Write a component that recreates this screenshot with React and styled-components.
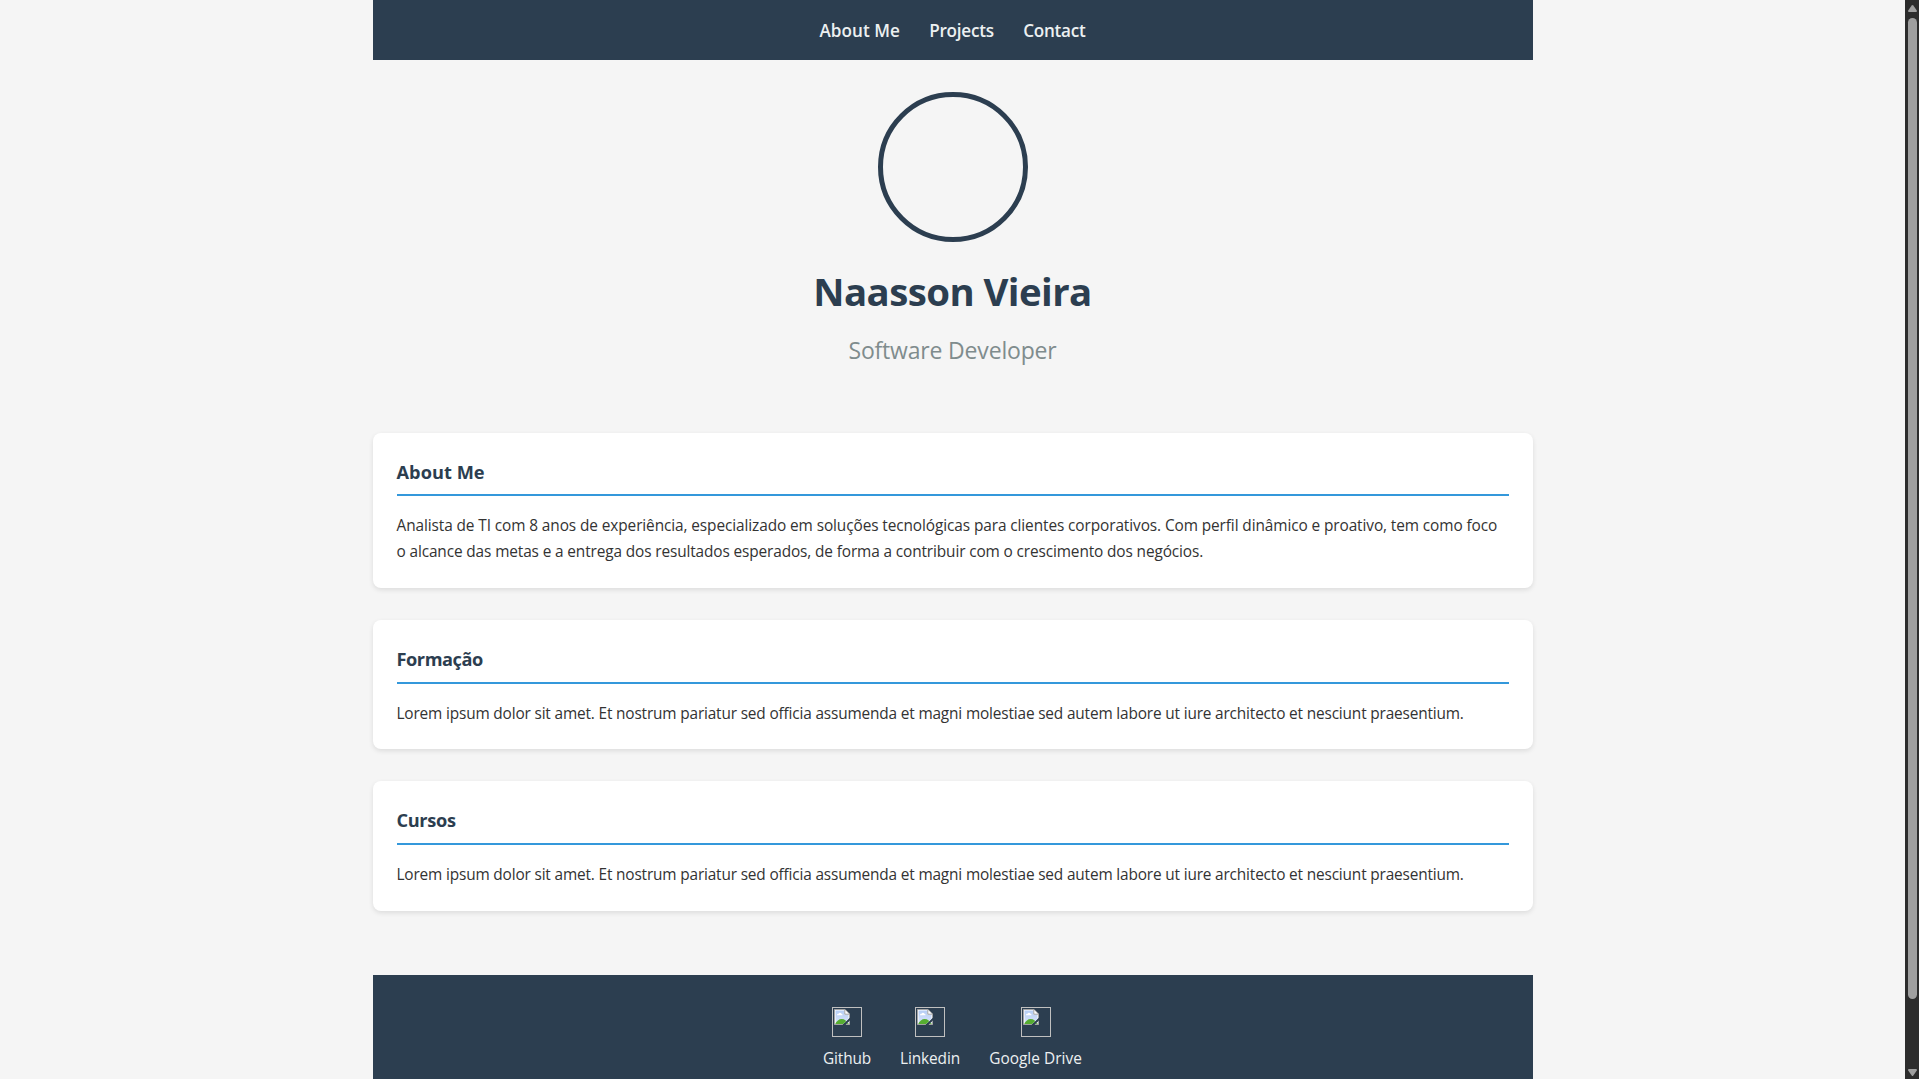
import React from 'react';
import styled, { createGlobalStyle } from 'styled-components';

const GlobalStyle = createGlobalStyle`
  *, *::before, *::after { box-sizing: border-box; }
  body {
    margin: 0;
    overflow: hidden;
    background: #f5f5f5;
    color: #333;
    font-family: "Open Sans", "Noto Sans", sans-serif;
    font-size: 15.4px;
    line-height: 25.6px;
  }
  h1, h2, h3, p, ul { margin: 0; padding: 0; }
  a { color: inherit; text-decoration: none; }
`;

const Viewport = styled.div`
  display: flex;
  height: 100vh;
  overflow: hidden;
`;

const Page = styled.div`
  flex: 1;
  min-width: 0;
`;

const Container = styled.div`
  width: 1160px;
  margin: 0 auto;
`;

const Nav = styled.nav`
  display: flex;
  justify-content: center;
  align-items: center;
  gap: 30px;
  height: 60px;
  padding-top: 2px;
  background: #2c3e50;
`;

const NavLink = styled.a`
  width: ${(p) => p.$width}px;
  display: flex;
  justify-content: center;
  white-space: nowrap;
  color: #ecf0f1;
  font-size: 17.1px;
  font-weight: 600;
  line-height: 28px;
  letter-spacing: ${(p) => p.$tracking}px;
`;

const Header = styled.header`
  display: flex;
  flex-direction: column;
  align-items: center;
  height: 372.5px;
  padding-top: 32px;
`;

const Avatar = styled.div`
  width: 150px;
  height: 150px;
  border: 5px solid #2c3e50;
  border-radius: 50%;
`;

const Name = styled.h1`
  margin-top: 17px;
  color: #2c3e50;
  font-size: 38.4px;
  font-weight: 700;
  line-height: 64px;
  letter-spacing: -0.57px;
`;

const Role = styled.p`
  margin-top: 8px;
  color: #7f8c8d;
  font-size: 23px;
  line-height: 38.4px;
  letter-spacing: -0.18px;
`;

const Sections = styled.main`
  display: flex;
  flex-direction: column;
  gap: 32px;
`;

const Card = styled.section`
  padding: 25px 24px 23px;
  background: #fff;
  border-radius: 8px;
  box-shadow: 0 2px 5px rgba(0, 0, 0, 0.1);
`;

const CardTitle = styled.h3`
  margin-bottom: 17px;
  padding-bottom: 7px;
  border-bottom: 2px solid #3498db;
  color: #2c3e50;
  font-size: 18.2px;
  font-weight: 700;
  line-height: 29.95px;
  letter-spacing: ${(p) => p.$tracking}px;
`;

const CardText = styled.p`
  white-space: nowrap;
`;

const Line = styled.span`
  display: block;
  letter-spacing: ${(p) => p.$tracking}px;
`;

const Footer = styled.footer`
  display: flex;
  justify-content: center;
  gap: 30px;
  height: 160px;
  margin-top: 64px;
  padding-top: 32px;
  background: #2c3e50;
`;

const Social = styled.a`
  width: ${(p) => p.$width}px;
  display: flex;
  flex-direction: column;
  align-items: center;
  gap: 9px;
  white-space: nowrap;
  color: #ecf0f1;
  letter-spacing: ${(p) => p.$tracking}px;
`;

const ImageFrame = styled.span`
  display: flex;
  align-items: flex-start;
  width: 30px;
  height: 30px;
  padding: 1px;
  border: 1px solid #c0c0c0;
`;

const ScrollTrack = styled.div`
  display: flex;
  flex-direction: column;
  align-items: center;
  width: 14px;
  padding: 5px 2px 3px 3px;
  background: #2c2c2c;
`;

const ScrollThumb = styled.div`
  width: 9px;
  height: 981px;
  margin: 6px 0 auto;
  border-radius: 4.5px;
  background: #9f9f9f;
`;

const Arrow = styled.svg`
  display: block;
  flex: none;
  transform: ${(p) => (p.$down ? 'rotate(180deg)' : 'none')};
`;

function BrokenImage() {
  return (
    <ImageFrame>
      <svg width="16" height="16" viewBox="0 0 16 16">
        <defs>
          <linearGradient id="sky" x1="0" y1="0" x2="0" y2="1">
            <stop offset="0" stopColor="#b5cdf5" />
            <stop offset="1" stopColor="#dbe6fb" />
          </linearGradient>
          <clipPath id="torn">
            <path d="M0 0H16V8.4L8.2 16H0ZM16 11.6V16H11.6Z" />
          </clipPath>
        </defs>
        <g clipPath="url(#torn)">
          <path d="M.5.5H11L15.5 5V15.5H.5Z" fill="#fff" stroke="#a3a3a3" />
          <path d="M1.5 1.5H10.5V5.5H14.5V14.5H1.5Z" fill="url(#sky)" />
          <path d="M3 6.2C3 5 4 4.6 4.6 4.7C5 3.4 7 3.4 7.3 4.7C8.2 4.7 8.6 5.4 8.5 6.2Z" fill="#fff" />
          <path d="M1.2 15C2.4 12 5 10 7.7 10C10.5 10 13 12 14.8 15Z" fill="#56ad31" />
          <path d="M10.8.8V5.2H15.2" fill="#fff" stroke="#a3a3a3" />
        </g>
      </svg>
    </ImageFrame>
  );
}

function ScrollArrow({ down }) {
  return (
    <Arrow $down={down} width="9" height="7" viewBox="0 0 9 7">
      <path d="M3.7.6Q4.5-.5 5.3.6L8.8 5.5Q9.3 7 8 7H1Q-.3 7 .2 5.5Z" fill="#9f9f9f" />
    </Arrow>
  );
}

const links = [
  { label: 'About Me', width: 80, tracking: 0.05 },
  { label: 'Projects', width: 63.6, tracking: -0.24 },
  { label: 'Contact', width: 62, tracking: -0.26 },
];

const lorem =
  'Lorem ipsum dolor sit amet. Et nostrum pariatur sed officia assumenda et magni molestiae sed autem labore ut iure architecto et nesciunt praesentium.';

const cards = [
  {
    title: 'About Me',
    tracking: 0.04,
    lines: [
      {
        text: 'Analista de TI com 8 anos de experiência, especializado em soluções tecnológicas para clientes corporativos. Com perfil dinâmico e proativo, tem como foco',
        tracking: -0.095,
      },
      {
        text: 'o alcance das metas e a entrega dos resultados esperados, de forma a contribuir com o crescimento dos negócios.',
        tracking: -0.124,
      },
    ],
  },
  { title: 'Formação', tracking: -0.45, lines: [{ text: lorem, tracking: -0.163 }] },
  { title: 'Cursos', tracking: -0.34, lines: [{ text: lorem, tracking: -0.163 }] },
];

const socials = [
  { label: 'Github', width: 47.5, tracking: -0.12 },
  { label: 'Linkedin', width: 58.5, tracking: -0.1 },
  { label: 'Google Drive', width: 92.5, tracking: 0.03 },
];

export default function App() {
  return (
    <>
      <GlobalStyle />
      <Viewport>
        <Page>
          <Container>
            <Nav>
              {links.map((l) => (
                <NavLink key={l.label} href="#" $width={l.width} $tracking={l.tracking}>
                  {l.label}
                </NavLink>
              ))}
            </Nav>
            <Header>
              <Avatar />
              <Name>Naasson Vieira</Name>
              <Role>Software Developer</Role>
            </Header>
            <Sections>
              {cards.map((c) => (
                <Card key={c.title}>
                  <CardTitle $tracking={c.tracking}>{c.title}</CardTitle>
                  <CardText>
                    {c.lines.map((l) => (
                      <Line key={l.text} $tracking={l.tracking}>
                        {l.text}
                      </Line>
                    ))}
                  </CardText>
                </Card>
              ))}
            </Sections>
            <Footer>
              {socials.map((s) => (
                <Social key={s.label} href="#" $width={s.width} $tracking={s.tracking}>
                  <BrokenImage />
                  {s.label}
                </Social>
              ))}
            </Footer>
          </Container>
        </Page>
        <ScrollTrack>
          <ScrollArrow />
          <ScrollThumb />
          <ScrollArrow down />
        </ScrollTrack>
      </Viewport>
    </>
  );
}
